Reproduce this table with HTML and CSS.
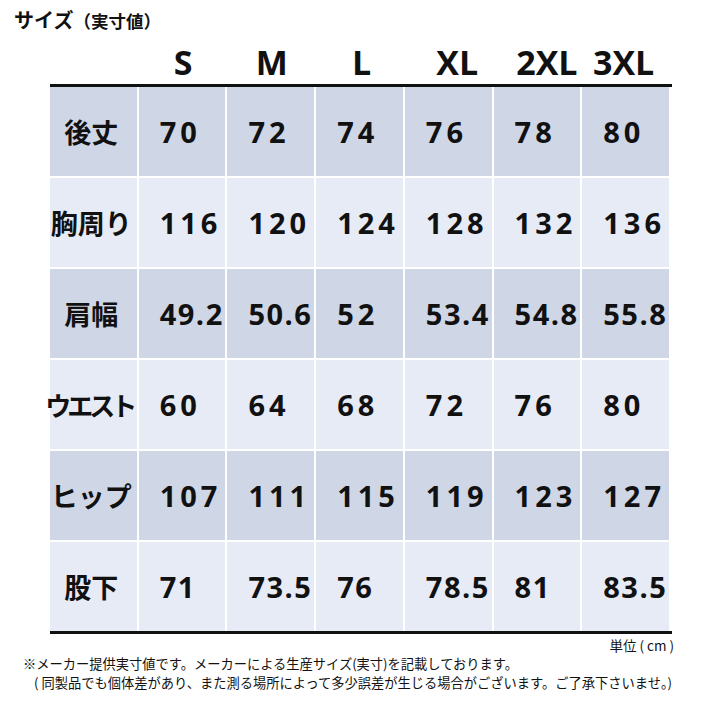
FILE: index.html
```html
<!DOCTYPE html>
<html lang="ja">
<head>
<meta charset="utf-8">
<link rel="stylesheet" href="styles.css">
</head>
<body>
<div class="title"><span class="t1">サイズ</span><span class="t2">（実寸値）</span></div>
<div class="head">
  <div></div>
  <div class="h h-s">S</div>
  <div class="h h-m">M</div>
  <div class="h h-l">L</div>
  <div class="h h-xl">XL</div>
  <div class="h h-2xl">2XL</div>
  <div class="h h-3xl">3XL</div>
</div>
<div class="table">
  <div class="row dark">
    <div class="cell label">後丈</div>
    <div class="cell val">70</div><div class="cell val">72</div><div class="cell val">74</div><div class="cell val">76</div><div class="cell val">78</div><div class="cell val">80</div>
  </div>
  <div class="row light">
    <div class="cell label">胸周り</div>
    <div class="cell val">116</div><div class="cell val">120</div><div class="cell val">124</div><div class="cell val">128</div><div class="cell val">132</div><div class="cell val">136</div>
  </div>
  <div class="row dark">
    <div class="cell label">肩幅</div>
    <div class="cell val dec">49.2</div><div class="cell val dec">50.6</div><div class="cell val">52</div><div class="cell val dec">53.4</div><div class="cell val dec">54.8</div><div class="cell val dec">55.8</div>
  </div>
  <div class="row light">
    <div class="cell label narrow">ウエスト</div>
    <div class="cell val">60</div><div class="cell val">64</div><div class="cell val">68</div><div class="cell val">72</div><div class="cell val">76</div><div class="cell val">80</div>
  </div>
  <div class="row dark">
    <div class="cell label">ヒップ</div>
    <div class="cell val">107</div><div class="cell val">111</div><div class="cell val">115</div><div class="cell val">119</div><div class="cell val">123</div><div class="cell val">127</div>
  </div>
  <div class="row light">
    <div class="cell label">股下</div>
    <div class="cell val tight">71</div><div class="cell val tight">73.5</div><div class="cell val tight">76</div><div class="cell val tight">78.5</div><div class="cell val tight">81</div><div class="cell val tight">83.5</div>
  </div>
</div>
<div class="unit">単位 ( cm )</div>
<div class="notes">
  <p class="n1">※メーカー提供実寸値です。メーカーによる生産サイズ(実寸)を記載しております。</p>
  <p class="n2">( 同製品でも個体差があり、また測る場所によって多少誤差が生じる場合がございます。ご了承下さいませ。)</p>
</div>
</body>
</html>
```
FILE: styles.css
```css
* { box-sizing: border-box; }
html, body { margin: 0; padding: 0; background: #ffffff; }
body {
  width: 720px;
  height: 720px;
  color: #111111;
  font-family: "Noto Sans CJK JP", "Noto Sans", sans-serif;
}
.title {
  height: 32px;
  padding: 8px 0 0 14px;
  line-height: 24px;
  font-weight: 700;
}
.t1 { font-size: 20px; }
.t2 { font-size: 17.5px; }

.head {
  margin-left: 50px;
  width: 619px;
  height: 52px;
  padding-bottom: 5px;
  display: grid;
  grid-template-columns: repeat(7, 1fr);
  column-gap: 2px;
  align-items: end;
}
.h {
  font-family: "Open Sans", "Liberation Sans", sans-serif;
  font-weight: 700;
  font-size: 34px;
  line-height: 1;
  text-align: center;
}
.h-s { padding-left: 2px; }
.h-m { padding-left: 2px; }
.h-l { padding-left: 4px; }
.h-xl { padding-left: 18px; }
.h-2xl { padding-left: 20px; }
.h-3xl { padding-right: 4px; }

.table {
  margin-left: 50px;
  width: 622px;
  padding-right: 3px;
  border-top: 3px solid #111111;
  border-bottom: 3px solid #111111;
  display: grid;
  row-gap: 2px;
}
.row {
  height: 89px;
  display: grid;
  grid-template-columns: repeat(7, 1fr);
  column-gap: 2px;
}
.dark .cell { background: #cfd7e7; }
.light .cell { background: #e7ebf5; }
.cell {
  display: flex;
  align-items: center;
  min-width: 0;
}
.label {
  justify-content: center;
  padding-right: 4px;
  font-weight: 700;
  font-size: 27px;
  white-space: nowrap;
}
.label.narrow {
  font-size: 26px;
  letter-spacing: -4px;
  padding-right: 8px;
}
.val {
  padding-left: 21px;
  font-family: "Open Sans", "Liberation Sans", sans-serif;
  font-weight: 700;
  font-size: 29px;
  letter-spacing: 4px;
  white-space: nowrap;
}
.val.dec { letter-spacing: 1.5px; }
.val.tight { letter-spacing: 1.5px; }

.unit {
  width: 674px;
  margin-top: 3px;
  text-align: right;
  font-size: 13.5px;
  line-height: 17px;
  white-space: pre;
}
.notes {
  margin-top: 0;
  padding-left: 23px;
  font-size: 13.25px;
  line-height: 19px;
}
.notes p { margin: 0; white-space: nowrap; }
.n2 { padding-left: 11px; }
```
